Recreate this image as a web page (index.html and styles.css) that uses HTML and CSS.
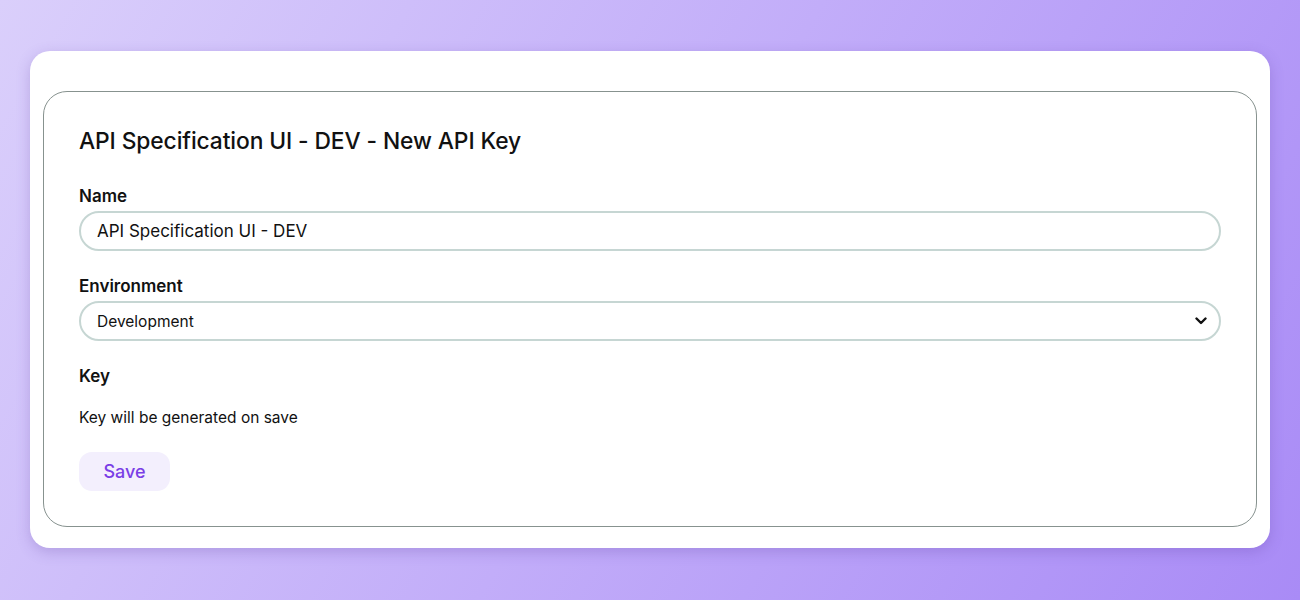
FILE: index.html
```html
<!DOCTYPE html>
<html lang="en">
<head>
  <meta charset="UTF-8" />
  <title>New API Key</title>
  <link rel="stylesheet" href="styles.css">
</head>
<body>

<div class="card">
  <form class="panel">
    <h1 class="panel-title">API Specification UI - DEV - New API Key</h1>

    <div class="field">
      <label class="field-label" for="name">Name</label>
      <input class="field-input" id="name" type="text" value="API Specification UI - DEV" />
    </div>

    <div class="field">
      <label class="field-label" for="env">Environment</label>
      <div class="select-wrap">
        <select class="field-input field-select" id="env">
          <option>Development</option>
          <option>Production</option>
        </select>
        <svg class="chevron" width="12" height="8" viewBox="0 0 12 8">
          <path d="M1.5 1.5 L6 6 L10.5 1.5" fill="none" stroke="#111" stroke-width="2.4" stroke-linecap="round" stroke-linejoin="round"/>
        </svg>
      </div>
    </div>

    <div class="field">
      <span class="field-label">Key</span>
      <p class="key-note">Key will be generated on save</p>
    </div>

    <div>
      <button type="button" class="btn-save">Save</button>
    </div>
  </form>
</div>

</body>
</html>
```

FILE: styles.css
```css
html, body {
  height: 100%;
}
body {
  margin: 0;
  font-family: Inter, "Open Sans", sans-serif;
  color: #111;
  background: linear-gradient(120deg, #dacffb 0%, #c2adf9 50%, #a98bf6 100%);
  padding: 51px 30px 0;
  box-sizing: border-box;
}
.card {
  background-color: #fff;
  border-radius: 20px;
  padding: 40px 13px 21px;
  box-shadow: 0 4px 14px rgba(90, 60, 160, 0.25);
}
.panel {
  border: 1px solid #87928f;
  border-radius: 24px;
  padding: 35px 35px 35px;
  display: flex;
  flex-direction: column;
}
.panel-title {
  margin: 0 0 31px;
  font-size: 22.8px;
  line-height: 28px;
  font-weight: 500;
  letter-spacing: -0.1px;
  color: #111;
}
.field {
  display: flex;
  flex-direction: column;
  margin-bottom: 25px;
}
.field-label {
  font-size: 17px;
  line-height: 20px;
  font-weight: 600;
  margin-bottom: 5px;
  color: #111;
}
.field-input {
  box-sizing: border-box;
  width: 100%;
  height: 40px;
  border: 2px solid #c6d6d3;
  border-radius: 20px;
  padding: 0 16px;
  font-family: inherit;
  font-size: 17px;
  color: #111;
  background: #fff;
  outline: none;
}
.select-wrap {
  position: relative;
}
.field-select {
  appearance: none;
  -webkit-appearance: none;
  font-size: 15.5px;
}
.chevron {
  position: absolute;
  right: 14px;
  top: 16px;
  pointer-events: none;
}
.key-note {
  margin: 17px 0 -1px;
  font-size: 15.5px;
  line-height: 20px;
  color: #111;
}
.btn-save {
  width: 91px;
  height: 39px;
  border: none;
  border-radius: 13px;
  background-color: #f3effd;
  color: #7a3ee6;
  font-family: inherit;
  font-size: 18px;
  font-weight: 500;
  cursor: pointer;
}
```
